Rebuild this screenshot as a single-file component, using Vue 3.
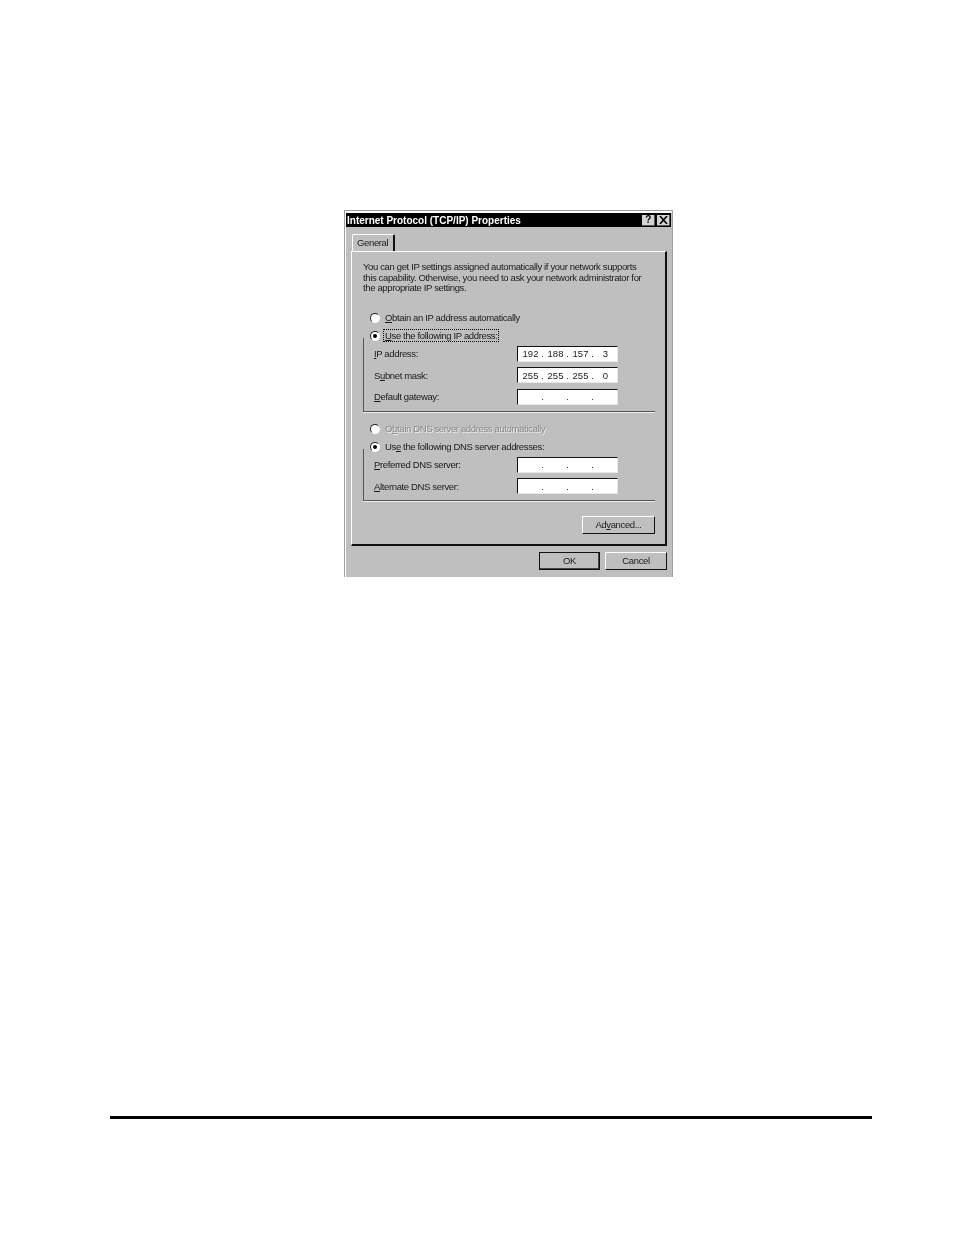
<script setup>
const introLines = [
  'You can get IP settings assigned automatically if your network supports',
  'this capability. Otherwise, you need to ask your network administrator for',
  'the appropriate IP settings.'
]
const ipFields = [
  { pre: '', key: 'I', post: 'P address:', octets: ['192', '188', '157', '3'] },
  { pre: 'S', key: 'u', post: 'bnet mask:', octets: ['255', '255', '255', '0'] },
  { pre: '', key: 'D', post: 'efault gateway:', octets: ['', '', '', ''] }
]
const dnsFields = [
  { pre: '', key: 'P', post: 'referred DNS server:', octets: ['', '', '', ''] },
  { pre: '', key: 'A', post: 'lternate DNS server:', octets: ['', '', '', ''] }
]
</script>

<template>
  <div class="page">
    <div class="dialog">
      <div class="titlebar">
        <span class="title">Internet Protocol (TCP/IP) Properties</span>
        <div class="title-btns">
          <span class="cap-btn">?</span>
          <span class="cap-btn">
            <svg width="9" height="8" viewBox="0 0 9 8"><path d="M1 0 L8 8 M8 0 L1 8" stroke="#000" stroke-width="1.6" fill="none" /></svg>
          </span>
        </div>
      </div>

      <div class="tabs">
        <div class="tab">General</div>
      </div>

      <div class="panel">
        <div class="intro">
          <div v-for="line in introLines" :key="line">{{ line }}</div>
        </div>

        <div class="radio-row first">
          <span class="radio"></span>
          <span><u>O</u>btain an IP address automatically</span>
        </div>
        <div class="radio-row">
          <span class="radio on"></span>
          <span class="focus"><u>U</u>se the following IP address:</span>
        </div>
        <div class="group">
          <div v-for="f in ipFields" :key="f.post" class="field-row">
            <span>{{ f.pre }}<u>{{ f.key }}</u>{{ f.post }}</span>
            <div class="ip-box">
              <span v-for="(o, i) in f.octets" :key="i" class="octet">
                <span class="num">{{ o }}</span>
                <span v-if="i < 3" class="dot">.</span>
              </span>
            </div>
          </div>
        </div>

        <div class="radio-row disabled second">
          <span class="radio"></span>
          <span>O<u>b</u>tain DNS server address automatically</span>
        </div>
        <div class="radio-row">
          <span class="radio on"></span>
          <span>Us<u>e</u> the following DNS server addresses:</span>
        </div>
        <div class="group">
          <div v-for="f in dnsFields" :key="f.post" class="field-row">
            <span><u>{{ f.key }}</u>{{ f.post }}</span>
            <div class="ip-box">
              <span v-for="(o, i) in f.octets" :key="i" class="octet">
                <span class="num">{{ o }}</span>
                <span v-if="i < 3" class="dot">.</span>
              </span>
            </div>
          </div>
        </div>

        <div class="advanced-row">
          <button class="btn advanced" type="button">Ad<u>v</u>anced...</button>
        </div>
      </div>

      <div class="footer">
        <button class="btn ok" type="button">OK</button>
        <button class="btn cancel" type="button">Cancel</button>
      </div>
    </div>

    <div class="page-rule"></div>
  </div>
</template>

<style scoped>
.page {
  width: 954px;
  height: 1235px;
  padding-top: 210px;
  box-sizing: border-box;
  background: #fff;
  overflow: hidden;
}

.dialog {
  width: 329px;
  height: 367px;
  margin-left: 344px;
  box-sizing: border-box;
  padding: 2px 1px 0 1px;
  background: #bfbfbf;
  border: 1px solid #a0a0a0;
  border-bottom: 0;
  box-shadow: inset 1px 2px 0 #fff;
  font-family: "Liberation Sans", Arial, sans-serif;
  font-size: 9.5px;
  letter-spacing: -0.36px;
  color: #1a1a1a;
  filter: blur(0.4px);
}

.titlebar {
  height: 14px;
  background: #000;
  display: flex;
  align-items: center;
  justify-content: space-between;
  padding: 0 1px 0 1px;
}

.title {
  color: #fff;
  font-weight: 700;
  font-size: 10px;
  letter-spacing: 0;
}

.title-btns {
  display: flex;
  gap: 2px;
}

.cap-btn {
  width: 13px;
  height: 11px;
  background: #d4d4d4;
  border-right: 1px solid #555;
  border-bottom: 1px solid #555;
  box-sizing: border-box;
  display: flex;
  align-items: center;
  justify-content: center;
  color: #000;
  font-weight: 700;
  font-size: 10px;
}

.tabs {
  height: 24px;
  display: flex;
  align-items: flex-end;
  padding-left: 6px;
}

.tab {
  width: 43px;
  height: 17px;
  box-sizing: border-box;
  border-left: 1px solid #fff;
  border-top: 1px solid #fff;
  border-right: 2px solid #111;
  border-radius: 2px 2px 0 0;
  padding-left: 4px;
  line-height: 15px;
}

.panel {
  width: 316px;
  height: 295px;
  margin-left: 5px;
  box-sizing: border-box;
  padding: 10px 10px 0 11px;
  border-top: 1px solid #fff;
  border-left: 1px solid #fff;
  border-right: 2px solid #111;
  border-bottom: 2px solid #111;
}

.intro {
  line-height: 10.5px;
  white-space: nowrap;
}

.radio-row {
  height: 18px;
  display: flex;
  align-items: center;
  gap: 5px;
  padding-left: 7px;
  white-space: nowrap;
}

.radio-row.first {
  margin-top: 15px;
}

.radio-row.second {
  margin-top: 8px;
}

.radio-row.disabled {
  color: #8a8a8a;
  text-shadow: 1px 1px 0 #eee;
}

.radio {
  width: 8px;
  height: 8px;
  border-radius: 50%;
  background: #fff;
  border: 1px solid #222;
  border-color: #222 #fff #fff #222;
  position: relative;
  flex: none;
}

.radio.on::after {
  content: "";
  position: absolute;
  left: 2px;
  top: 2px;
  width: 4px;
  height: 4px;
  border-radius: 50%;
  background: #000;
}

.focus {
  border: 1px dotted #000;
  padding: 0 1px;
  margin-left: -2px;
}

.group {
  margin-top: -7px;
  padding: 8px 0 6px 10px;
  border-left: 1px solid #555;
  border-bottom: 1px solid #555;
  box-shadow: 0 1px 0 #eee;
  display: flex;
  flex-direction: column;
  gap: 5.5px;
}

.field-row {
  display: flex;
  align-items: center;
  justify-content: space-between;
  padding-right: 37px;
  height: 16px;
}

.ip-box {
  width: 101px;
  height: 16px;
  box-sizing: border-box;
  background: #fff;
  border: 1px solid #111;
  border-color: #111 #e8e8e8 #e8e8e8 #111;
  display: flex;
  align-items: center;
  padding-left: 2px;
  letter-spacing: 0;
}

.octet {
  width: 25px;
  flex: none;
  display: flex;
}

.num {
  width: 21px;
  text-align: center;
}

.dot {
  width: 3px;
  text-align: center;
}

.advanced-row {
  display: flex;
  justify-content: flex-end;
  margin-top: 15px;
}

.btn {
  height: 18px;
  padding: 0 0 1px;
  box-sizing: border-box;
  background: #bfbfbf;
  font-family: inherit;
  font-size: 9.5px;
  letter-spacing: inherit;
  color: #1a1a1a;
  border: 1px solid #fff;
  border-right-color: #111;
  border-bottom-color: #111;
}

.advanced {
  width: 73px;
}

.footer {
  display: flex;
  justify-content: flex-end;
  gap: 5px;
  margin-top: 6px;
  padding-right: 4px;
}

.ok {
  width: 61px;
  border-color: #111;
  box-shadow: inset -1px -1px 0 #444;
}

.cancel {
  width: 62px;
}

.page-rule {
  width: 762px;
  height: 3px;
  margin: 539px 0 0 110px;
  background: #000;
}
</style>
